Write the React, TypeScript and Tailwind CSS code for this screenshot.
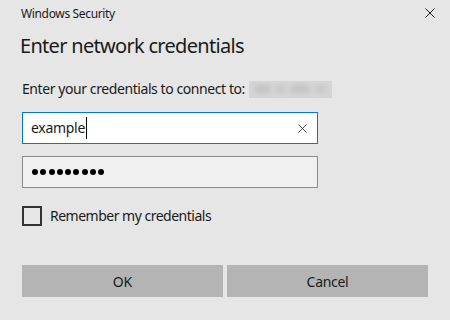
import { useState } from "react";

function CloseGlyph({ size, color }: { size: number; color: string }) {
    return (
        <svg width={size} height={size} viewBox="0 0 10 10" fill="none">
            <path d="M0.5 0.5 L9.5 9.5 M9.5 0.5 L0.5 9.5" stroke={color} strokeWidth="1" />
        </svg>
    );
}

export default function App() {
    const [remember, setRemember] = useState(false);

    return (
        <div
            className="w-[450px] h-[320px] bg-[#e6e6e6] text-[#1a1a1a] overflow-hidden flex flex-col"
            style={{ fontFamily: '"Noto Sans", "Open Sans", sans-serif' }}
        >
            {/* Title bar */}
            <div className="flex items-start justify-between pl-[21px] pr-[15px] pt-[5px] h-[28px]">
                <span className="text-[12px] leading-[18px] tracking-[-0.35px]">Windows Security</span>
                <button className="mt-[3px]">
                    <CloseGlyph size={10} color="#222" />
                </button>
            </div>

            <h1 className="pl-[20px] text-[20px] leading-[28px] mt-[4px] tracking-[-0.7px]">Enter network credentials</h1>

            <div className="pl-[22px] mt-[19px] flex items-center gap-[4px] h-[20px]">
                <span className="text-[14px] leading-[20px] tracking-[-0.42px]">Enter your credentials to connect to:</span>
                <div className="relative w-[83px] h-[17px] bg-[#d5d5d5] overflow-hidden">
                    <div className="absolute inset-0 flex items-center gap-[6px] px-[6px] blur-[2px]">
                        <div className="w-[16px] h-[8px] bg-[#c4c4c4]" />
                        <div className="w-[10px] h-[8px] bg-[#c9c9c9]" />
                        <div className="w-[20px] h-[8px] bg-[#c4c4c4]" />
                        <div className="w-[12px] h-[8px] bg-[#cacaca]" />
                    </div>
                </div>
            </div>

            {/* Username */}
            <div className="ml-[22px] mt-[13px] w-[296px] h-[32px] bg-white border border-[#0078d7] flex items-center pl-[8px] pr-[10px]">
                <span className="text-[14px] leading-[20px] tracking-[-0.3px]">example</span>
                <span className="w-px h-[22px] bg-black ml-[1px]" />
                <span className="flex-1" />
                <CloseGlyph size={9} color="#333" />
            </div>

            {/* Password */}
            <div className="ml-[22px] mt-[12px] w-[296px] h-[32px] bg-[#f0f0f0] border border-[#8a8a8a] flex items-center pl-[9px] gap-[2.3px]">
                {Array.from({ length: 9 }).map((_, i) => (
                    <span key={i} className="w-[6px] h-[6px] rounded-full bg-black" />
                ))}
            </div>

            {/* Remember */}
            <label className="ml-[22px] mt-[18px] flex items-center gap-[8px] h-[20px] cursor-pointer">
                <span
                    onClick={() => setRemember(!remember)}
                    className="w-[20px] h-[20px] border-2 border-[#333] bg-transparent flex items-center justify-center"
                >
                    {remember && <span className="w-[10px] h-[10px] bg-[#333]" />}
                </span>
                <span className="text-[14px] leading-[20px] tracking-[-0.5px]">Remember my credentials</span>
            </label>

            {/* Buttons */}
            <div className="ml-[22px] mt-[39px] flex gap-[4px]">
                <button className="w-[201px] h-[32px] bg-[#b4b4b4] text-[14px]">OK</button>
                <button className="w-[201px] h-[32px] bg-[#b4b4b4] text-[14px] tracking-[-0.3px]">Cancel</button>
            </div>
        </div>
    );
}
